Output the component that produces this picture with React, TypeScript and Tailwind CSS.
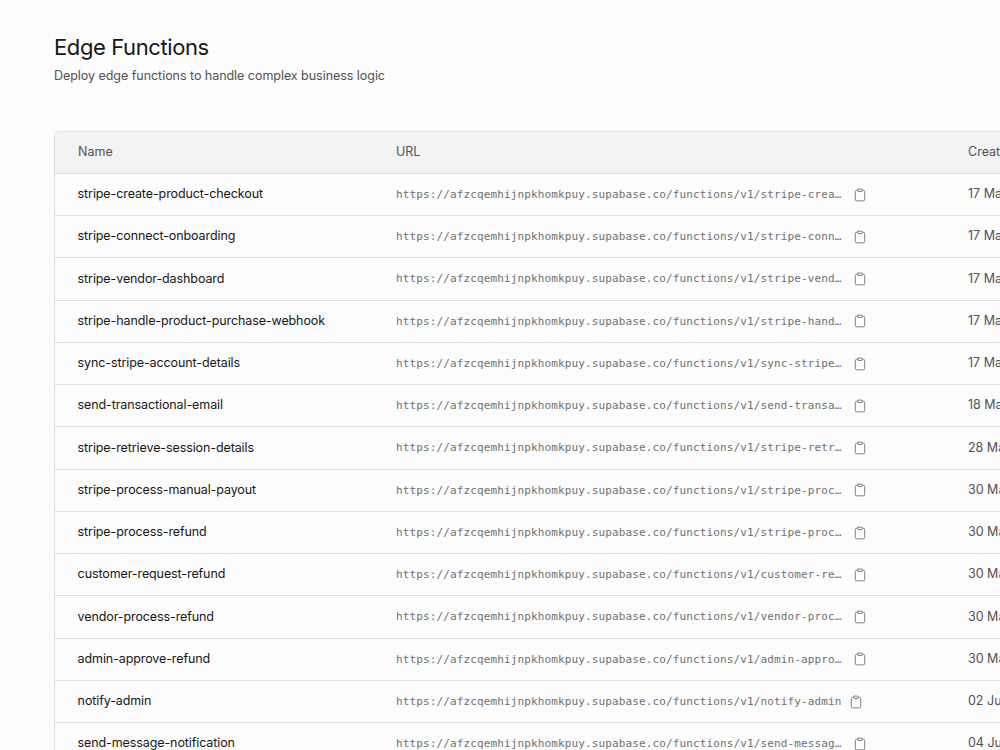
import React from 'react';
import { Clipboard } from 'lucide-react';

const BASE_URL = 'https://afzcqemhijnpkhomkpuy.supabase.co/functions/v1/';

const functions = [
  { name: 'stripe-create-product-checkout', path: 'stripe-crea…', created: '17 May' },
  { name: 'stripe-connect-onboarding', path: 'stripe-conn…', created: '17 May' },
  { name: 'stripe-vendor-dashboard', path: 'stripe-vend…', created: '17 May' },
  { name: 'stripe-handle-product-purchase-webhook', path: 'stripe-hand…', created: '17 May' },
  { name: 'sync-stripe-account-details', path: 'sync-stripe…', created: '17 May' },
  { name: 'send-transactional-email', path: 'send-transa…', created: '18 May' },
  { name: 'stripe-retrieve-session-details', path: 'stripe-retr…', created: '28 May' },
  { name: 'stripe-process-manual-payout', path: 'stripe-proc…', created: '30 May' },
  { name: 'stripe-process-refund', path: 'stripe-proc…', created: '30 May' },
  { name: 'customer-request-refund', path: 'customer-re…', created: '30 May' },
  { name: 'vendor-process-refund', path: 'vendor-proc…', created: '30 May' },
  { name: 'admin-approve-refund', path: 'admin-appro…', created: '30 May' },
  { name: 'notify-admin', path: 'notify-admin', created: '02 Jun' },
  { name: 'send-message-notification', path: 'send-messag…', created: '04 Jun' },
];

const FunctionRow = ({ name, path, created }: { name: string; path: string; created: string }) => {
  const truncated = path.endsWith('…');
  return (
    <div className="flex h-[42.25px] shrink-0 items-center border-t border-[#dfdfdf] pl-[22.6px]">
      <div className="w-[318.4px] shrink-0 tracking-[-0.1px] text-[#171717]">{name}</div>
      <div className="flex w-[572px] shrink-0 items-center">
        <span
          className={`pt-[1.2px] font-['DejaVu_Sans_Mono',monospace] text-[11px] tracking-[0.128px] text-[#707070] ${truncated ? 'w-[457px]' : 'w-[453px]'}`}
        >
          {BASE_URL}
          {path}
        </span>
        <Clipboard className="text-[#808080]" size={14} strokeWidth={1.7} />
      </div>
      <div className="shrink-0 text-[#525252]">{created}</div>
    </div>
  );
};

const App = () => {
  return (
    <div className="h-[750px] w-[1000px] overflow-hidden bg-[#fcfcfc] pl-[54px] pt-[33px] font-['Inter',sans-serif] text-[12.5px] whitespace-nowrap">
      <h1 className="text-[22px] leading-7 tracking-[-0.4px] text-[#171717]">Edge Functions</h1>
      <p className="mt-[5px] leading-5 tracking-[-0.04px] text-[#525252]">
        Deploy edge functions to handle complex business logic
      </p>
      <div className="mt-[44.9px] w-[1100px] overflow-hidden rounded-[5px] border border-[#dfdfdf]">
        <div className="flex h-[41px] items-center bg-[#f3f3f3] pb-px pl-[23px] text-[#525252]">
          <div className="w-[318px] shrink-0">Name</div>
          <div className="w-[572px] shrink-0">URL</div>
          <div className="shrink-0">Created</div>
        </div>
        {functions.map((fn) => (
          <FunctionRow key={fn.name} {...fn} />
        ))}
      </div>
    </div>
  );
};

export default App;
